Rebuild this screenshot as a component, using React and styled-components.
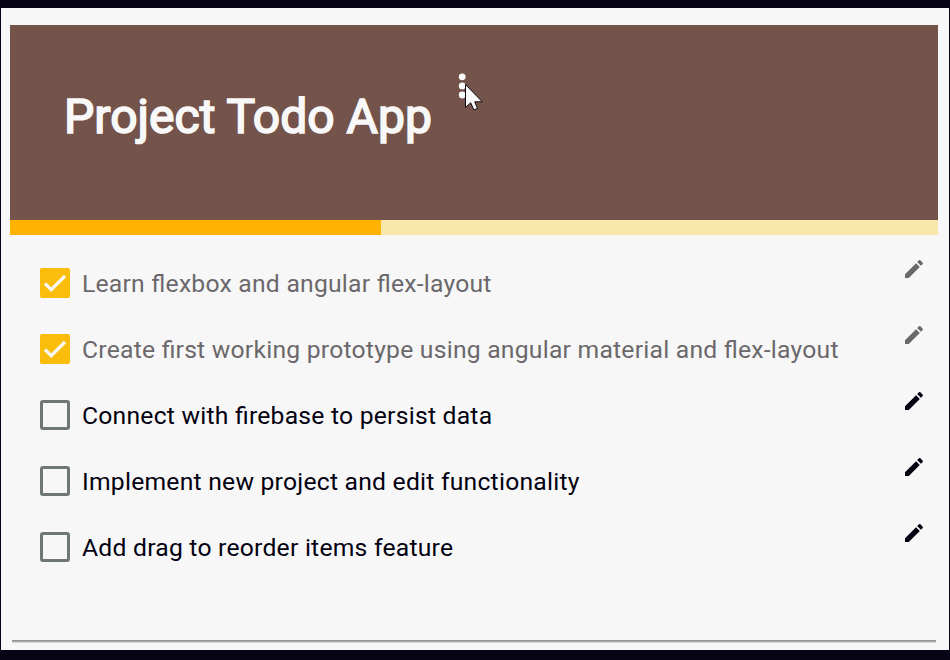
import React from 'react';
import styled, { createGlobalStyle } from 'styled-components';

const Global = createGlobalStyle`
  *{box-sizing:border-box}
  body{margin:0;background:#070515;font-family:Roboto,sans-serif}
`;
const Page = styled.main`height:660px;padding:8px 1px 10px;overflow:hidden;position:relative;`;
const Surface = styled.div`height:642px;background:#f7f7f7;padding:17px 10px 9px 9px;`;
const Card = styled.section`height:618px;width:928px;background:#f7f7f7;display:flex;flex-direction:column;`;
const Header = styled.header`height:195px;background:#73534a;display:flex;align-items:flex-start;padding:48px 0 0 54px;`;
const Title = styled.h1`margin:16px 0 0;width:393px;font-size:48px;line-height:56px;font-weight:400;color:#f8f8f8;-webkit-text-stroke:1.7px #f8f8f8;white-space:nowrap;letter-spacing:.03px;`;
const Menu = styled.svg`display:block;width:10px;height:28px;fill:#fafafa;`;
const Progress = styled.div`height:15px;background:#f9e6ab;`;
const Bar = styled.div`height:15px;background:#ffb300;width:371px;`;
const List = styled.ul`flex:1;list-style:none;margin:0;padding:15px 12px 0 30px;`;
const Row = styled.li`height:66px;display:flex;align-items:center;color:${p => p.$done ? '#6b686b' : '#030110'};`;
const Box = styled.span`width:30px;height:30px;margin-right:12px;flex:none;border-radius:${p => p.$done ? '2px' : '3px'};border:${p => p.$done ? '0' : '3px solid #6e7773'};background:${p => p.$done ? '#fabd0b' : 'transparent'};`;
const Check = styled.svg`display:block;width:30px;height:30px;fill:none;stroke:#f8f8f8;stroke-width:3.2;`;
const Label = styled.span`flex:1;font-size:24.7px;letter-spacing:.23px;font-feature-settings:"liga" 1;line-height:30px;white-space:nowrap;padding-top:2px;`;
const Pencil = styled.svg`width:24px;height:24px;flex:none;margin-bottom:29px;fill:currentColor;`;
const Edge = styled.div`height:3px;margin:0 2px;background:linear-gradient(#94949b 0 1px,#a6a6ab 1px 2px,#d9d9d3 2px);`;
const Cursor = styled.svg`position:absolute;left:464px;top:82px;width:20px;height:30px;`;

const items = [
  ['Learn flexbox and angular flex-layout', true],
  ['Create first working prototype using angular material and flex-layout', true],
  ['Connect with firebase to persist data', false],
  ['Implement new project and edit functionality', false],
  ['Add drag to reorder items feature', false],
];

export default function App() {
  return <Page><Global /><Surface><Card>
    <Header><Title>Project Todo App</Title>
      <Menu viewBox="0 0 10 28"><circle cx="5.2" cy="3.8" r="3.4"/><circle cx="5.2" cy="12.9" r="3.4"/><circle cx="5.2" cy="22" r="3.4"/></Menu>
    </Header>
    <Progress><Bar /></Progress>
    <List>{items.map(([text, done]) => <Row key={text} $done={done}>
      <Box $done={done}>{done && <Check viewBox="0 0 30 30"><path d="M5 15.5l6.2 6.2L25 8"/></Check>}</Box>
      <Label>{text}</Label>
      <Pencil viewBox="0 0 24 24"><path d="M3 17.25V21h3.75L17.81 9.94l-3.75-3.75zM20.71 7.04a1 1 0 0 0 0-1.41l-2.34-2.34a1 1 0 0 0-1.41 0l-1.83 1.83 3.75 3.75z"/></Pencil>
    </Row>)}</List>
    <Edge />
  </Card></Surface>
  <Cursor viewBox="0 0 20 30"><path d="M1.5 2.5V25.5L6.7 20.8L9.9 28L13.5 26.3L10.7 19.8H18.3Z" fill="#f8f8f8" stroke="#100812"/></Cursor>
  </Page>;
}
